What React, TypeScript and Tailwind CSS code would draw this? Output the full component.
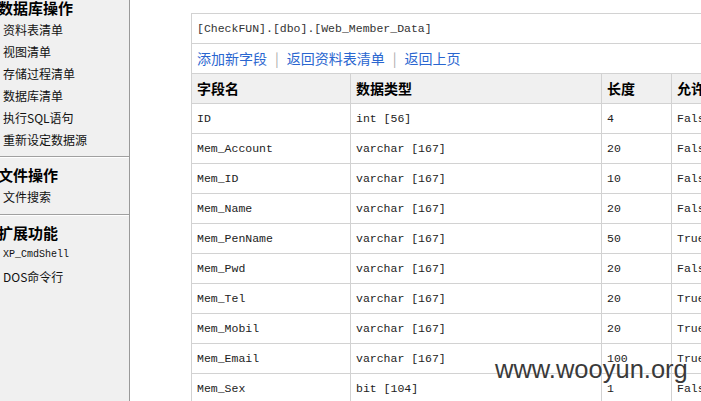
import React from "react";

const sections = [
  {
    title: "数据库操作",
    items: ["资料表清单", "视图清单", "存储过程清单", "数据库清单", "执行SQL语句", "重新设定数据源"],
  },
  { title: "文件操作", items: ["文件搜索"] },
  { title: "扩展功能", items: ["XP_CmdShell", "DOS命令行"] },
];

const rows: [string, string, string, string][] = [
  ["ID", "int [56]", "4", "False"],
  ["Mem_Account", "varchar [167]", "20", "False"],
  ["Mem_ID", "varchar [167]", "10", "False"],
  ["Mem_Name", "varchar [167]", "20", "False"],
  ["Mem_PenName", "varchar [167]", "50", "True"],
  ["Mem_Pwd", "varchar [167]", "20", "False"],
  ["Mem_Tel", "varchar [167]", "20", "True"],
  ["Mem_Mobil", "varchar [167]", "20", "True"],
  ["Mem_Email", "varchar [167]", "100", "True"],
  ["Mem_Sex", "bit [104]", "1", "False"],
];

const cjk = "font-['SimSun','Noto_Sans_CJK_SC',sans-serif]";
const mono = "font-['Liberation_Mono','Noto_Sans_CJK_SC',monospace]";

// sidebar menu, one block per section with etched dividers between
function Sidebar() {
  return (
    <div className={`w-[130px] shrink-0 h-full bg-[#f0f0f0] border-r border-[#9a9a9a] ${cjk}`}>
      {sections.map((s, i) => (
        <div key={s.title}>
          <div className={i === 0 ? "-mt-[9px] pt-[6px] pb-[5px]" : "pt-[6px] pb-[6px]"}>
            <div className="h-[22px] leading-[22px] text-[15px] font-bold text-black -ml-[2px] whitespace-nowrap">
              {s.title}
            </div>
            {s.items.map((it) => (
              <div
                key={it}
                className={`h-[22px] leading-[22px] pl-[3px] text-[#111] whitespace-nowrap ${
                  it === "XP_CmdShell" ? mono + " text-[10px]" : "text-[12px]"
                }`}
              >
                {it}
              </div>
            ))}
          </div>
          {i < sections.length - 1 && (
            <>
              <div className="h-px bg-[#a0a0a0]" />
              <div className="h-px bg-white" />
            </>
          )}
        </div>
      ))}
    </div>
  );
}

export default function App() {
  return (
    <div className="relative w-[701px] h-[401px] overflow-hidden bg-white flex">
      <Sidebar />
      <div className="flex-1 overflow-hidden pl-[61px] pt-[13px]">
        <table className="border-collapse w-[560px] table-fixed">
          <colgroup>
            <col className="w-[159px]" />
            <col className="w-[251px]" />
            <col className="w-[70px]" />
            <col className="w-[80px]" />
          </colgroup>
          <tbody>
            <tr className="h-[30px]">
              <td colSpan={4} className={`border border-[#d2d2d2] px-[5px] text-[11.5px] text-[#333] ${mono}`}>
                [CheckFUN].[dbo].[Web_Member_Data]
              </td>
            </tr>
            <tr className="h-[30px]">
              <td colSpan={4} className={`border border-[#d2d2d2] px-[5px] text-[14px] text-[#2a66d0] whitespace-nowrap ${cjk}`}>
                添加新字段<span className="text-[#aaa] mx-[8px]">|</span>返回资料表清单
                <span className="text-[#aaa] mx-[8px]">|</span>返回上页
              </td>
            </tr>
            <tr className={`h-[30px] bg-[#f0f0f0] text-[14px] font-bold text-black ${cjk}`}>
              <td className="border border-[#d2d2d2] px-[5px]">字段名</td>
              <td className="border border-[#d2d2d2] px-[5px]">数据类型</td>
              <td className="border border-[#d2d2d2] px-[5px]">长度</td>
              <td className="border border-[#d2d2d2] px-[5px] whitespace-nowrap">允许空</td>
            </tr>
            {rows.map((r) => (
              <tr key={r[0]} className={`h-[30px] text-[11.5px] text-[#222] ${mono}`}>
                {r.map((c, j) => (
                  <td key={j} className="border border-[#d2d2d2] px-[5px] whitespace-nowrap">
                    {c}
                  </td>
                ))}
              </tr>
            ))}
          </tbody>
        </table>
      </div>
      <div className="absolute left-[495px] top-[354px] text-[25.5px] leading-[30px] text-[#3a3a3a] font-['Liberation_Sans',Arial,sans-serif] [text-shadow:0_0_2px_#fff]">
        www.wooyun.org
      </div>
    </div>
  );
}
